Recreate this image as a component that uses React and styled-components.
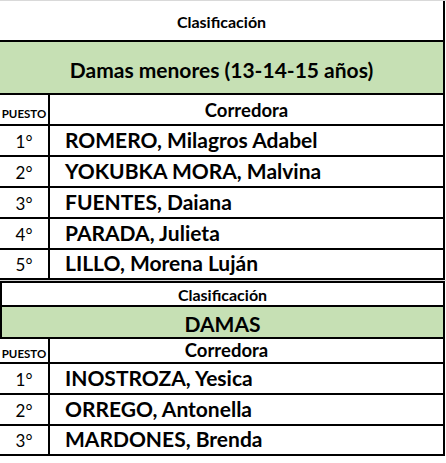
import React from "react";
import styled, { createGlobalStyle } from "styled-components";

const Global = createGlobalStyle`
  *, *::before, *::after { box-sizing: border-box; }
  html, body { margin: 0; padding: 0; background: #fff; }
  body { font-family: Lato, "Open Sans", sans-serif; color: #000; }
`;

const Page = styled.div`
  width: 446px;
  display: flex;
  flex-direction: column;
  border-top: 1px solid #d9d9d9;
`;

const Table = styled.section`
  width: 445px;
  display: flex;
  flex-direction: column;
  border-right: 2px solid #000;
  border-top: ${(p) => (p.$boxed ? "2px solid #000" : "none")};
`;

const Separator = styled.div`
  width: 446px;
  height: 1px;
  background: #d4d4d4;
`;

const TitleRow = styled.div`
  height: ${(p) => p.$h}px;
  display: flex;
  align-items: center;
  justify-content: center;
  padding-top: ${(p) => p.$pt ?? 2}px;
  border-bottom: 2px solid #000;
  border-left: ${(p) => (p.$boxed ? "2px solid #000" : "none")};
  font-weight: 700;
  font-size: 16px;
  line-height: 1;
`;

const GroupRow = styled(TitleRow)`
  background: #c6e0b4;
  font-size: ${(p) => p.$size}px;
`;

const Row = styled.div`
  height: ${(p) => p.$h}px;
  display: grid;
  grid-template-columns: 50px 1fr;
  border-bottom: 2px solid #000;
`;

const PosCell = styled.div`
  border-right: 2px solid #000;
  display: flex;
  align-items: flex-end;
  justify-content: center;
  padding-bottom: ${(p) => p.$pb}px;
  font-size: ${(p) => (p.$head ? "11.5px" : "17px")};
  font-weight: ${(p) => (p.$head ? 700 : 400)};
  line-height: 1;
`;

const HeadCell = styled.div`
  display: flex;
  align-items: flex-end;
  justify-content: center;
  padding-bottom: ${(p) => p.$pb}px;
  padding-right: ${(p) => p.$shift}px;
  font-size: 18.5px;
  font-weight: 700;
  line-height: 1;
`;

const NameCell = styled.div`
  display: flex;
  align-items: flex-end;
  padding-left: 15px;
  padding-bottom: 5px;
  font-size: 21px;
  font-weight: 700;
  line-height: 1;
  white-space: nowrap;
`;

function Ranking({ boxed, group, groupSize, groupH, titleH, headH, headPb, shift, names }) {
  return (
    <Table $boxed={boxed}>
      <TitleRow $h={titleH} $boxed={boxed}>Clasificación</TitleRow>
      <GroupRow $h={groupH} $size={groupSize} $boxed={boxed} $pt={3}>{group}</GroupRow>
      <Row $h={headH}>
        <PosCell $head $pb={headPb}>PUESTO</PosCell>
        <HeadCell $pb={headPb} $shift={shift}>Corredora</HeadCell>
      </Row>
      {names.map((n, i) => (
        <Row key={n} $h={i === names.length - 1 ? 30 : 31}>
          <PosCell $pb={5}>{i + 1}°</PosCell>
          <NameCell>{n}</NameCell>
        </Row>
      ))}
    </Table>
  );
}

export default function App() {
  return (
    <>
      <Global />
      <Page>
        <Ranking
          group="Damas menores (13-14-15 años)"
          titleH={41}
          groupH={53}
          groupSize={21}
          headH={31}
          headPb={5}
          shift={0}
          names={[
            "ROMERO, Milagros Adabel",
            "YOKUBKA MORA, Malvina",
            "FUENTES, Daiana",
            "PARADA, Julieta",
            "LILLO, Morena Luján",
          ]}
        />
        <Separator />
        <Ranking
          boxed
          group="DAMAS"
          titleH={24}
          groupH={32}
          groupSize={21}
          headH={25}
          headPb={3}
          shift={40}
          names={["INOSTROZA, Yesica", "ORREGO, Antonella", "MARDONES, Brenda"]}
        />
      </Page>
    </>
  );
}
